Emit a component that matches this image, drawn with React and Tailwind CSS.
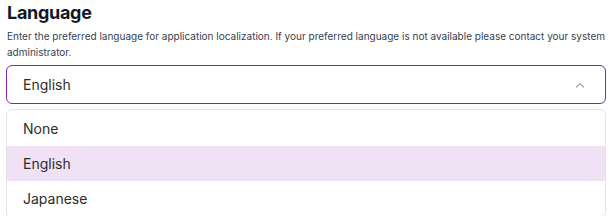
import { useState } from 'react'

const OPTIONS = ['None', 'English', 'Japanese']

export default function App() {
  const [value, setValue] = useState('English')

  return (
    <div className="bg-white w-[614px] h-[216px] overflow-hidden pl-[6px] pr-[8px] pt-[1px]" style={{ fontFamily: 'Inter, "Noto Sans", sans-serif' }}>
      <h2 className="text-[18px] font-bold leading-[24px] tracking-[-0.3px] text-[#111827] pl-[1px]">Language</h2>
      <p className="mt-[3px] text-[10px] leading-[16px] text-[#374151] pl-[1px]">
        Enter the preferred language for application localization. If your preferred language is not available please contact your system administrator.
      </p>
      <div className="mt-[5px] h-[39px] border border-[#8224b0] rounded-[6px] flex items-center justify-between pl-[16px] pr-[20px]">
        <span className="text-[14px] text-[#2d2d2d]">{value}</span>
        <svg width="10" height="6" viewBox="0 0 10 6" fill="none" className="text-[#9ca3af]">
          <path d="M1.5 5L5 1.5L8.5 5" stroke="currentColor" strokeWidth="1.2" strokeLinecap="round" />
        </svg>
      </div>
      <ul className="mt-[5px] border border-[#e3e5ec] rounded-[6px] py-[1px] overflow-hidden">
        {OPTIONS.map((o) => (
          <li
            key={o}
            onClick={() => setValue(o)}
            className={`h-[35px] flex items-center pl-[16px] text-[14px] text-[#2d2d2d] ${o === value ? 'bg-[#f0e2f4]' : ''}`}
          >
            {o}
          </li>
        ))}
      </ul>
    </div>
  )
}
